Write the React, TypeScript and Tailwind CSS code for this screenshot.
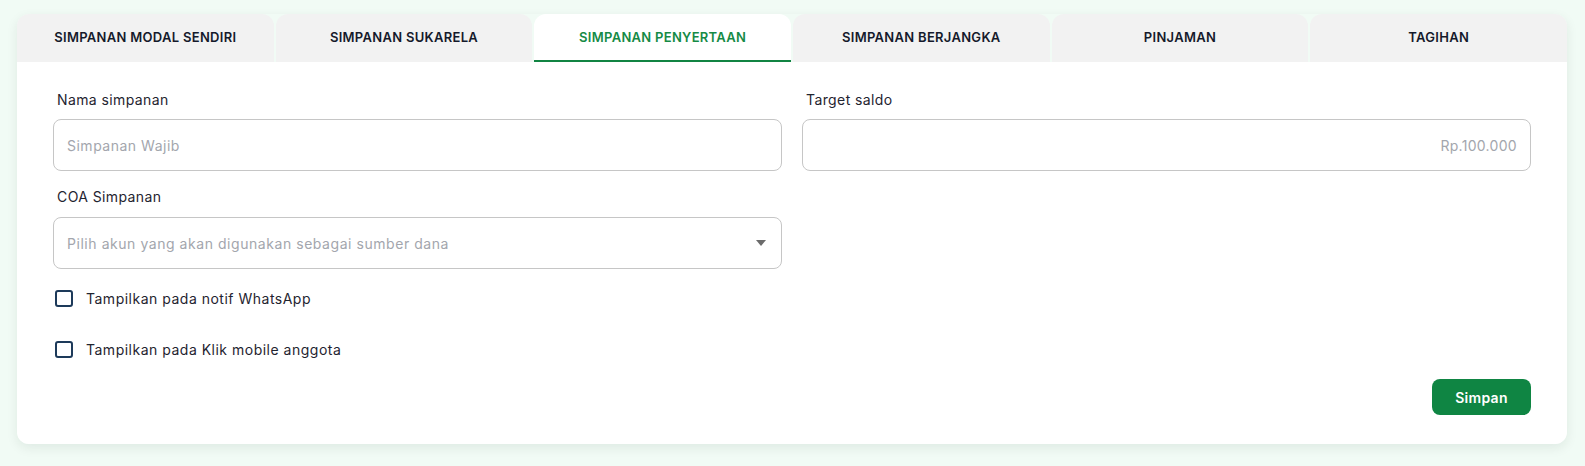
import { useState } from 'react';

const tabs = [
  'SIMPANAN MODAL SENDIRI',
  'SIMPANAN SUKARELA',
  'SIMPANAN PENYERTAAN',
  'SIMPANAN BERJANGKA',
  'PINJAMAN',
  'TAGIHAN',
];

function Checkbox({ label }: { label: string }) {
  const [checked, setChecked] = useState(false);
  return (
    <label className="flex items-center gap-[13px] cursor-pointer h-6">
      <span
        onClick={() => setChecked(!checked)}
        className={`w-[18px] h-[17px] rounded-[3px] border-2 border-[#1d3a5a] ${checked ? 'bg-[#1d3a5a]' : 'bg-white'}`}
      />
      <span className="text-[14px] tracking-[0.5px] text-[#1f2430]">{label}</span>
    </label>
  );
}

export default function App() {
  const [active, setActive] = useState(2);

  return (
    <div
      className="min-h-[466px] bg-[#f1fbf5] pt-[14px] pl-[17px] pr-[18px]"
      style={{ fontFamily: 'Inter, "Noto Sans", sans-serif' }}
    >
      <div className="rounded-xl shadow-[0_4px_12px_rgba(0,40,20,0.08)]">
        {/* Tabs */}
        <div className="grid grid-cols-6 gap-[2px] h-[48px]">
          {tabs.map((t, i) => (
            <button
              key={t}
              onClick={() => setActive(i)}
              className={`relative rounded-t-xl text-[13px] font-semibold tracking-[0.3px] ${
                active === i ? 'bg-white text-[#158a45]' : 'bg-[#f2f2f2] text-[#151a2b]'
              }`}
            >
              {t}
              {active === i && <span className="absolute left-0 right-0 bottom-0 h-[2px] bg-[#118443]" />}
            </button>
          ))}
        </div>

        {/* Body */}
        <div className="bg-white rounded-b-xl px-[36px] pt-[28px] pb-[29px]">
          <div className="grid grid-cols-2 gap-x-[20px]">
            <div>
              <div className="pl-1 text-[14px] leading-5 tracking-[0.4px] text-[#1f2430]">Nama simpanan</div>
              <div className="mt-[9px] h-[52px] rounded-lg border border-[#c6c6c6] flex items-center px-[13px]">
                <span className="text-[14px] tracking-[0.5px] text-[#a3a6ad]">Simpanan Wajib</span>
              </div>
            </div>
            <div>
              <div className="pl-1 text-[14px] leading-5 tracking-[0.4px] text-[#1f2430]">Target saldo</div>
              <div className="mt-[9px] h-[52px] rounded-lg border border-[#c6c6c6] flex items-center justify-end px-[13px]">
                <span className="text-[14px] tracking-[0.3px] text-[#a3a6ad]">Rp.100.000</span>
              </div>
            </div>

            <div className="mt-[16px]">
              <div className="pl-1 text-[14px] leading-5 tracking-[0.4px] text-[#1f2430]">COA Simpanan</div>
              <div className="mt-[10px] h-[52px] rounded-lg border border-[#c6c6c6] flex items-center justify-between pl-[13px] pr-[15px]">
                <span className="text-[14px] tracking-[0.55px] text-[#a3a6ad]">Pilih akun yang akan digunakan sebagai sumber dana</span>
                <svg width="10" height="6" viewBox="0 0 10 6">
                  <path d="M0 0h10L5 6z" fill="#6b6b6b" />
                </svg>
              </div>
            </div>
            <div />
          </div>

          <div className="mt-[17px] flex flex-col gap-[27px] pl-[2px]">
            <Checkbox label="Tampilkan pada notif WhatsApp" />
            <Checkbox label="Tampilkan pada Klik mobile anggota" />
          </div>

          <div className="flex justify-end mt-[18px]">
            <button className="w-[99px] h-[36px] rounded-lg bg-[#0f8543] text-white text-[14px] font-semibold tracking-[0.3px]">
              Simpan
            </button>
          </div>
        </div>
      </div>
    </div>
  );
}
